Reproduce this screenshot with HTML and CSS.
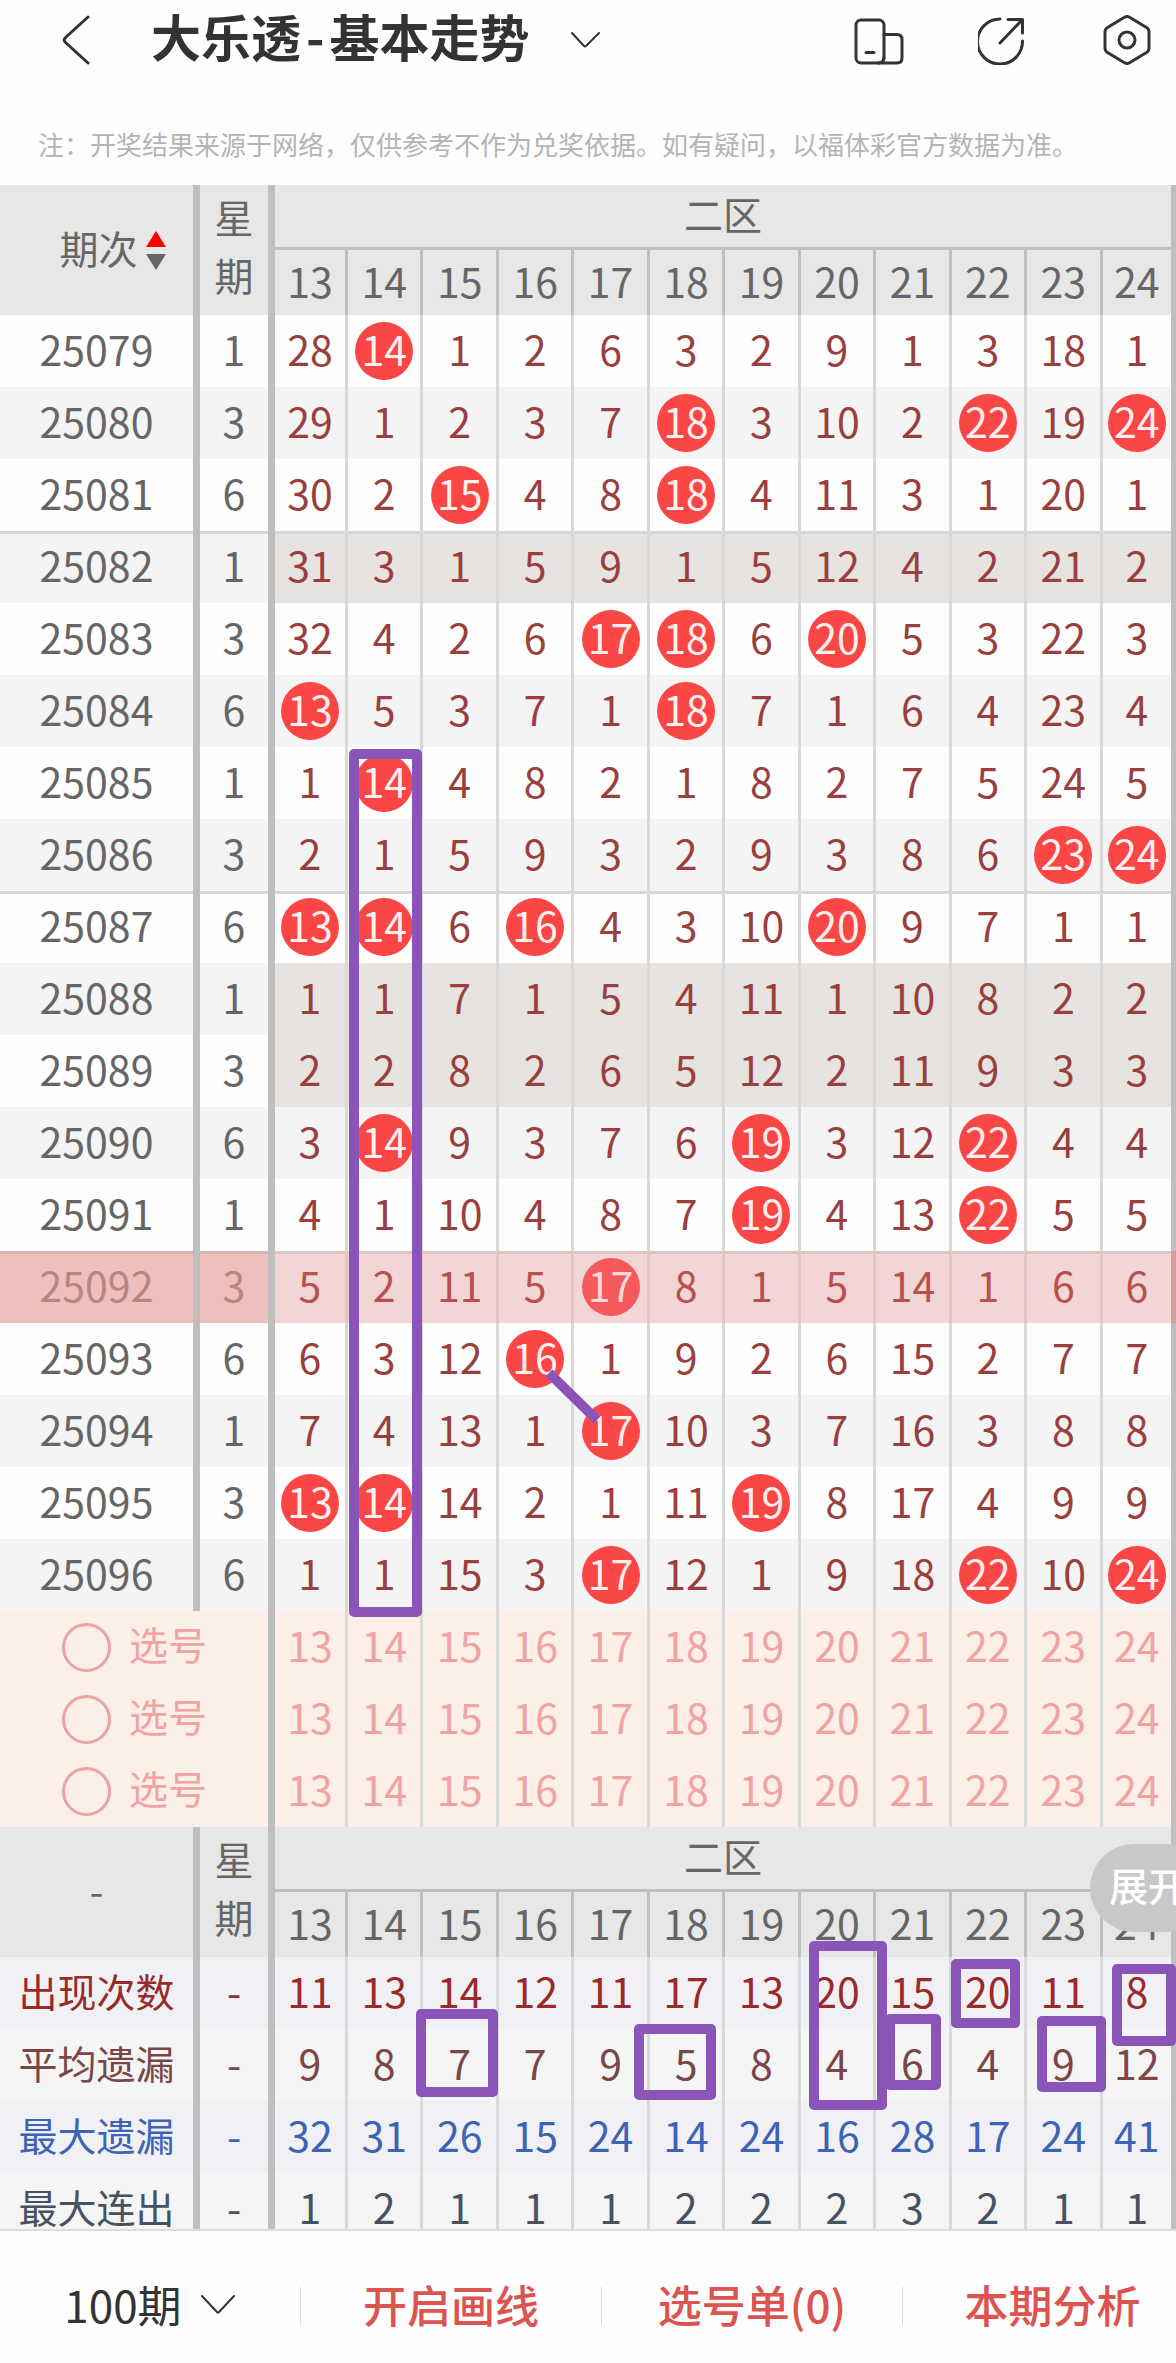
FILE: index.html
```html
<!DOCTYPE html>
<html lang="zh-CN">
<head>
<meta charset="utf-8">
<meta name="viewport" content="width=device-width, initial-scale=1">
<title>大乐透-基本走势</title>
<link rel="stylesheet" href="styles.css">
</head>
<body>
<div class="app">
  <header class="topbar">
    <button class="icon-btn back" type="button" aria-label="返回">
      <svg width="30" height="50" viewBox="0 0 30 50"><path d="M26 2 L3.500 22.500 Q1 25 3.500 27.500 L26 48" /></svg>
    </button>
    <h1 class="title">大乐透<span class="dash">-</span>基本走势</h1>
    <button class="icon-btn title-toggle" type="button" aria-label="切换走势">
      <svg width="30" height="20" viewBox="0 0 30 20"><path class="thin" d="M2 3 L14 16 Q15 17 16 16 L29 3" /></svg>
    </button>
    <nav class="tools" aria-label="工具">
      <button class="icon-btn" type="button" aria-label="横竖屏">
        <svg width="50" height="50" viewBox="0 0 50 50"><rect x="2" y="5" width="28" height="43" rx="5"/><path d="M30 19.500 H43 Q48 19.500 48 24.500 V43 Q48 48 43 48 H24 Q30 48 30 42 M12 37.500 H20"/></svg>
      </button>
      <button class="icon-btn" type="button" aria-label="分享">
        <svg width="50" height="50" viewBox="0 0 50 50"><path d="M22 4 A22.500 22.500 0 1 0 44.500 26 M22 28 L44 5 M30 4.500 H44.500 V18"/></svg>
      </button>
      <button class="icon-btn" type="button" aria-label="设置">
        <svg width="50" height="50" viewBox="0 0 50 50"><path d="M22 2.500 Q25 0.500 28 2.500 L44.500 12.500 Q47 14 47 17 V33 Q47 36 44.500 37.500 L28 47.500 Q25 49.500 22 47.500 L5.500 37.500 Q3 36 3 33 V17 Q3 14 5.500 12.500 Z"/><circle cx="25" cy="25" r="8"/></svg>
      </button>
    </nav>
  </header>
  <p class="notice">注：开奖结果来源于网络，仅供参考不作为兑奖依据。如有疑问，以福体彩官方数据为准。</p>

  <main class="chart">
    <div class="sheet">
      <table class="trend">
        <colgroup>
          <col class="c-issue"><col class="c-week"><col class="c-first">
          <col><col><col><col><col><col><col><col><col><col><col>
        </colgroup>
        <tbody id="trend"></tbody>
      </table>
      <svg class="marks" viewBox="0 0 1176 2060" preserveAspectRatio="none" aria-hidden="true">
        <rect x="354" y="569" width="63" height="858"/>
        <path d="M549 1188 L597 1235"/>
        <rect x="421" y="1829" width="72" height="78"/>
        <rect x="639" y="1844" width="72" height="66"/>
        <rect x="814" y="1761" width="68" height="159"/>
        <rect x="890" y="1834" width="46" height="66"/>
        <rect x="956" y="1779" width="59" height="59"/>
        <rect x="1042" y="1836" width="59" height="66"/>
        <rect x="1117" y="1784" width="54" height="72"/>
      </svg>
      <button class="expand" type="button">展开</button>
    </div>
  </main>

  <footer class="bottombar">
    <button class="tab range" type="button">100期
      <svg width="36" height="20" viewBox="0 0 36 20"><path class="thin" d="M2 2 L17 18 Q18 19 19 18 L34 2"/></svg>
    </button>
    <button class="tab" type="button">开启画线</button>
    <button class="tab" type="button">选号单(0)</button>
    <button class="tab last" type="button">本期分析</button>
  </footer>
</div>
<script src="trend.js"></script>
</body>
</html>
```
FILE: styles.css
```css
* { box-sizing: border-box; }

body {
  margin: 0;
  background: #fefefe;
  color: #666;
  font-family: "Noto Sans CJK SC", "Noto Sans", sans-serif;
}

button {
  margin: 0;
  padding: 0;
  border: 0;
  background: none;
  color: inherit;
  font: inherit;
}

svg { display: block; }

.app {
  display: flex;
  flex-direction: column;
  height: 100vh;
  overflow: hidden;
}

/* top bar */
.topbar {
  display: flex;
  flex: none;
  align-items: center;
  height: 80px;
  padding: 0 24px 0 62px;
  color: #333;
}

.icon-btn path,
.icon-btn rect,
.icon-btn circle,
.tab path {
  fill: none;
  stroke: #333;
  stroke-width: 3;
  stroke-linecap: round;
  stroke-linejoin: round;
}

.icon-btn .thin,
.tab .thin { stroke-width: 2; }

.title {
  margin: 0 40px 0 59px;
  padding-bottom: 10px;
  font-size: 50px;
  font-weight: 700;
  line-height: 60px;
  white-space: nowrap;
}

.dash { margin: 0 5px; }

.tools {
  display: flex;
  gap: 74px;
  margin-left: auto;
}

.notice {
  flex: none;
  margin: 0;
  padding: 46px 38px 23px;
  color: #b4b4b4;
  font-size: 26px;
  line-height: 36px;
  white-space: nowrap;
}

/* trend table */
.chart {
  flex: 1;
  min-height: 0;
  overflow: hidden;
}

.sheet {
  position: relative;
  overflow: hidden;
}

.trend {
  width: calc(100% + 2px);
  table-layout: fixed;
  border-collapse: separate;
  border-spacing: 0;
  font-size: 41px;
  line-height: 58px;
  text-align: center;
}

.c-issue { width: 200px; }
.c-week { width: 75px; }
.c-first { width: 73px; }

.trend th,
.trend td {
  height: 72px;
  padding: 0 0 6px;
  border-right: 3px solid #d9d9d9;
  font-weight: 400;
}

.trend tr > .issue,
.trend tr > .week,
.trend tr > .edge { border-right: 7px solid #bfbfbf; }

.trend .head th {
  height: 65px;
  background: #e7e7e7;
  border-color: #bfbfbf;
  line-height: 54px;
}

.trend .head .zone { border-bottom: 3px solid #bfbfbf; }

.trend .head .week {
  padding-bottom: 10px;
  line-height: 58px;
}

.trend .label { font-size: 39px; }

.sort {
  display: inline-flex;
  gap: 8px;
  align-items: center;
  padding-left: 32px;
}

.arrows {
  display: grid;
  gap: 7px;
  padding-top: 6px;
}

.up,
.down {
  border: 10px solid transparent;
  border-top-width: 0;
  border-bottom: 16px solid #f00;
}

.down {
  border-top: 16px solid #666;
  border-bottom-width: 0;
}

.draw .num { color: #9a3f3d; }
.draw.even { background: #f4f4f4; }
.draw.rule > * { box-shadow: inset 0 3px #d6d6d6; }
.draw.blank .num { background: #e7e3e1; }

.trend .hit { padding: 0; }

.ball {
  display: block;
  width: 58px;
  height: 58px;
  margin: 0 auto;
  border-radius: 50%;
  background: #fb4646;
  color: #fff0ee;
  line-height: 52px;
}

.draw.current > * {
  background: #eebfbc;
  border-color: #d49d9a;
  box-shadow: inset 0 3px #dcaeac;
  color: #b98583;
}

.draw.current > .num {
  background: #f1d6d5;
  border-color: #e5c5c4;
  box-shadow: inset 0 3px #dfc4c4;
  color: #b9504f;
}

.draw.current > .edge { border-color: #d49d9a; }
.current .ball { background: #f5595b; color: #ffd9d8; }

.pick { background: #fcefe7; color: #efa3a3; }

.trend .pick th {
  padding: 0 0 0 62px;
  border-right: 7px solid #bfbfbf;
}

.pick label {
  display: flex;
  gap: 18px;
  align-items: center;
}

.pick label span { padding-bottom: 8px; }

.pick input {
  width: 49px;
  height: 49px;
  margin: 0;
  border: 3px solid #eaa2a2;
  border-radius: 50%;
  appearance: none;
}

.stat { background: #f1f1f5; }
.stat.alt { background: #f5f5f6; }
.s-count { color: #9a2a2a; }
.s-avg { color: #7a4646; }
.s-max { color: #3d63b4; }
.s-run { color: #465162; }

/* pen marks drawn over the table */
.marks {
  position: absolute;
  inset: 0;
  width: 100%;
  height: 100%;
  pointer-events: none;
}

.marks rect,
.marks path {
  fill: none;
  stroke: #8a54b8;
  stroke-width: 10;
  stroke-linejoin: round;
}

.expand {
  position: absolute;
  top: 1659px;
  right: -34px;
  width: 120px;
  height: 88px;
  padding: 0 0 8px 19px;
  border-radius: 44px;
  background: #c8c8c8;
  color: #fff;
  font-size: 39px;
  font-weight: 500;
  text-align: left;
  white-space: nowrap;
}

/* bottom bar */
.bottombar {
  display: grid;
  flex: none;
  grid-template-columns: 301fr 301fr 301fr 273fr;
  align-items: center;
  height: 134px;
  padding-top: 18px;
  border-top: 2px solid #dcdcdc;
}

.tab {
  display: flex;
  gap: 18px;
  align-items: center;
  justify-content: center;
  height: 38px;
  padding-bottom: 4px;
  border-right: 1px solid #dcdcdc;
  color: #dc5450;
  font-size: 44px;
  font-weight: 500;
  line-height: 34px;
  white-space: nowrap;
}

.range {
  color: #333;
  font-weight: 400;
}

.last {
  padding-left: 26px;
  border-right: 0;
}
```
FILE: trend.js
```js
// A number in brackets is a drawn ball; the others count the draws since the last hit.
const draws = `
25079 1 28 [14] 1 2 6 3 2 9 1 3 18 1
25080 3 29 1 2 3 7 [18] 3 10 2 [22] 19 [24]
25081 6 30 2 [15] 4 8 [18] 4 11 3 1 20 1
25082 1 31 3 1 5 9 1 5 12 4 2 21 2
25083 3 32 4 2 6 [17] [18] 6 [20] 5 3 22 3
25084 6 [13] 5 3 7 1 [18] 7 1 6 4 23 4
25085 1 1 [14] 4 8 2 1 8 2 7 5 24 5
25086 3 2 1 5 9 3 2 9 3 8 6 [23] [24]
25087 6 [13] [14] 6 [16] 4 3 10 [20] 9 7 1 1
25088 1 1 1 7 1 5 4 11 1 10 8 2 2
25089 3 2 2 8 2 6 5 12 2 11 9 3 3
25090 6 3 [14] 9 3 7 6 [19] 3 12 [22] 4 4
25091 1 4 1 10 4 8 7 [19] 4 13 [22] 5 5
25092 3 5 2 11 5 [17] 8 1 5 14 1 6 6
25093 6 6 3 12 [16] 1 9 2 6 15 2 7 7
25094 1 7 4 13 1 [17] 10 3 7 16 3 8 8
25095 3 [13] [14] 14 2 1 11 [19] 8 17 4 9 9
25096 6 1 1 15 3 [17] 12 1 9 18 [22] 10 [24]
`.trim().split("\n").map(line => line.split(" "));

const stats = [
  ["s-count", "出现次数", [11, 13, 14, 12, 11, 17, 13, 20, 15, 20, 11, 8]],
  ["s-avg alt", "平均遗漏", [9, 8, 7, 7, 9, 5, 8, 4, 6, 4, 9, 12]],
  ["s-max", "最大遗漏", [32, 31, 26, 15, 24, 14, 24, 16, 28, 17, 24, 41]],
  ["s-run alt", "最大连出", [1, 2, 1, 1, 1, 2, 2, 2, 3, 2, 1, 1]]
];

const numbers = Array.from({ length: 12 }, (_, i) => i + 13);

const cells = (values, tag = "td") => values.map((value, i) => {
  const hit = /^\[(\d+)\]$/.exec(value);
  const names = ["num", hit ? "hit" : "", i === values.length - 1 ? "edge" : ""];
  const text = hit ? `<span class="ball">${hit[1]}</span>` : value;
  return `<${tag} class="${names.filter(Boolean).join(" ")}">${text}</${tag}>`;
}).join("");

const head = corner => `
  <tr class="head">
    <th class="issue label" rowspan="2">${corner}</th>
    <th class="week label" rowspan="2">星<br>期</th>
    <th class="zone edge label" colspan="12">二区</th>
  </tr>
  <tr class="head">${cells(numbers, "th")}</tr>`;

const drawRow = ([issue, week, ...values], i) => {
  const names = ["draw"];
  if (i % 2) names.push("even");
  if (i % 5 === 3) names.push("rule");
  if (!values.some(v => v[0] === "[")) names.push("blank");
  if (issue === "25092") names.push("current");
  return `<tr class="${names.join(" ")}"><th class="issue">${issue}</th><td class="week">${week}</td>${cells(values)}</tr>`;
};

const pickRow = n => `
  <tr class="pick"><th class="label" colspan="2">
    <label><input type="radio" name="pick" value="${n}"><span>选号</span></label>
  </th>${cells(numbers)}</tr>`;

const statRow = ([names, label, values]) => `
  <tr class="stat ${names}"><th class="issue label">${label}</th><td class="week">-</td>${cells(values)}</tr>`;

document.getElementById("trend").innerHTML =
  head('<span class="sort">期次<span class="arrows"><i class="up"></i><i class="down"></i></span></span>') +
  draws.map(drawRow).join("") +
  [1, 2, 3].map(pickRow).join("") +
  head("-") +
  stats.map(statRow).join("");
```
